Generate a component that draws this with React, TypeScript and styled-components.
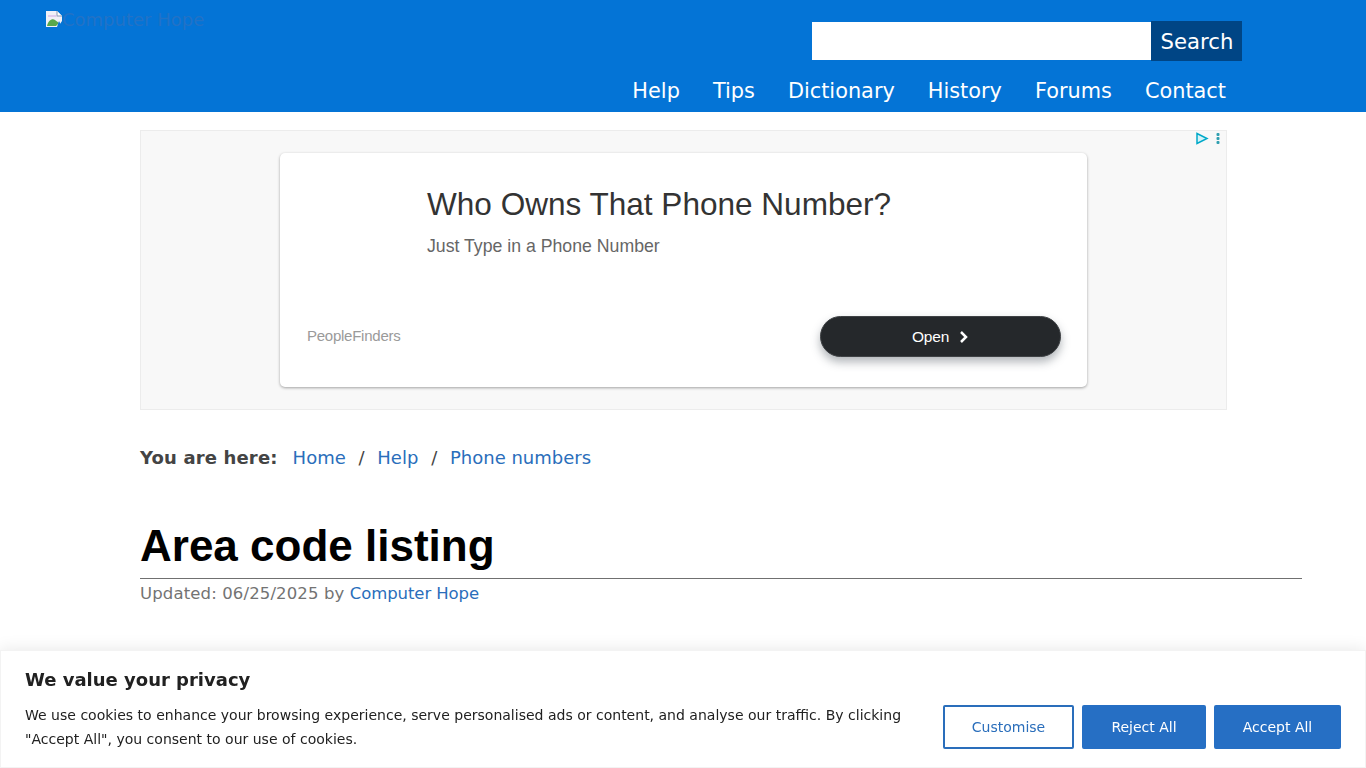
import React from "react";
import styled, { createGlobalStyle } from "styled-components";

const GlobalStyle = createGlobalStyle`
  html, body {
    margin: 0;
    padding: 0;
    background: #fff;
    font-family: "DejaVu Sans", Verdana, sans-serif;
    overflow: hidden;
  }
`;

const Page = styled.div`
  height: 768px;
  overflow: hidden;
`;

const Header = styled.header`
  height: 112px;
  box-sizing: border-box;
  background: #0474d6;
  padding: 11px 124px 0 46px;
  display: flex;
  justify-content: space-between;
`;

const LogoAlt = styled.div`
  display: flex;
  align-items: flex-start;
  height: 20px;
  font-size: 18px;
  line-height: 18px;
  color: #2272c6;
`;

const HeaderRight = styled.div`
  display: flex;
  flex-direction: column;
  align-items: flex-end;
`;

const SearchForm = styled.form`
  display: flex;
  align-items: center;
  margin-top: 10px;
`;

const SearchInput = styled.input`
  width: 339px;
  height: 38px;
  box-sizing: border-box;
  border: 0;
  background: #fff;
`;

const SearchButton = styled.button`
  width: 91px;
  height: 40px;
  border: 0;
  padding: 0 0 0 1px;
  background: #004585;
  color: #fff;
  font: 21.2px "DejaVu Sans", Verdana, sans-serif;
`;

const Nav = styled.nav`
  display: flex;
  gap: 33px;
  margin: 17px 16px 0 0;
`;

const NavLink = styled.a`
  color: #fff;
  font-size: 20.85px;
  line-height: 26px;
  text-decoration: none;
`;

const Main = styled.main`
  padding: 18px 64px 0 140px;
`;

const AdFrame = styled.div`
  position: relative;
  width: 1087px;
  height: 280px;
  box-sizing: border-box;
  background: #f8f8f8;
  border: 1px solid #ececec;
  padding: 22px 139px 0;
`;

const AdChoices = styled.div`
  position: absolute;
  top: 0;
  right: 0;
  display: flex;
`;

const AdCard = styled.div`
  width: 807px;
  height: 234px;
  box-sizing: border-box;
  background: #fff;
  border-radius: 5px;
  box-shadow: 0 1px 3px rgba(0, 0, 0, 0.35);
  padding: 31px 26px 0 27px;
  font-family: "Liberation Sans", Arial, sans-serif;
`;

const AdTitle = styled.div`
  margin-left: 120px;
  font-size: 31.55px;
  line-height: 40px;
  color: #333;
`;

const AdSubtitle = styled.div`
  margin: 11px 0 0 120px;
  font-size: 17.7px;
  line-height: 22px;
  color: #666;
`;

const AdFooter = styled.div`
  display: flex;
  justify-content: space-between;
  align-items: center;
  margin-top: 59px;
`;

const AdBrand = styled.span`
  padding-bottom: 2px;
  font-size: 15px;
  letter-spacing: -0.25px;
  color: #9a9a9a;
`;

const AdButton = styled.div`
  width: 241px;
  height: 41px;
  box-sizing: border-box;
  display: flex;
  align-items: center;
  justify-content: center;
  gap: 10px;
  border: 1px solid #3f4245;
  border-radius: 21px;
  background: #25282b;
  color: #fff;
  font-size: 15.5px;
  letter-spacing: -0.2px;
  box-shadow: 0 5px 10px rgba(60, 70, 80, 0.4);
`;

const Breadcrumbs = styled.div`
  display: flex;
  margin-top: 36px;
  font-size: 18px;
  line-height: 24px;
  color: #444;
`;

const CrumbLabel = styled.strong`
  margin-right: 15px;
  letter-spacing: 0.15px;
`;

const CrumbLink = styled.a`
  color: #2a6ebb;
  text-decoration: none;
`;

const CrumbDivider = styled.span`
  margin: 0 12.75px;
`;

const Title = styled.h1`
  margin: 49px 0 0;
  padding-bottom: 5px;
  border-bottom: 1px solid #707070;
  font: bold 44px/54px "Liberation Sans", Arial, sans-serif;
  color: #000;
`;

const Byline = styled.div`
  font-size: 16.5px;
  line-height: 30px;
  letter-spacing: 0.13px;
  color: #737373;
`;

const BylineLink = styled.a`
  color: #2a6ebb;
  letter-spacing: -0.1px;
  text-decoration: none;
`;

const CookieBanner = styled.section`
  position: fixed;
  left: 0;
  right: 0;
  bottom: 0;
  height: 118px;
  box-sizing: border-box;
  background: #fff;
  border: 1px solid #f3f3f3;
  box-shadow: 0 0 16px rgba(0, 0, 0, 0.1);
  padding: 17px 24px 0;
  color: #212121;
`;

const CookieTitle = styled.h2`
  margin: 0;
  font-size: 18px;
  line-height: 24px;
`;

const CookieRow = styled.div`
  display: flex;
  justify-content: space-between;
  align-items: flex-start;
  margin-top: 11px;
`;

const CookieText = styled.p`
  width: 890px;
  margin: 0;
  font-size: 14.03px;
  line-height: 24px;
`;

const CookieActions = styled.div`
  display: flex;
  gap: 8px;
  margin-top: 2px;
`;

const CookieButton = styled.button<{ $outlined?: boolean; $width: number }>`
  width: ${(p) => p.$width}px;
  height: 44px;
  box-sizing: border-box;
  border: 2px solid ${(p) => (p.$outlined ? "#2a6ebb" : "#266fc4")};
  border-radius: 2px;
  padding: 0;
  background: ${(p) => (p.$outlined ? "#fff" : "#266fc4")};
  color: ${(p) => (p.$outlined ? "#2a6ebb" : "#fff")};
  font: 14px "DejaVu Sans", Verdana, sans-serif;
`;

const BrokenImage = () => (
  <svg width="16" height="16" viewBox="0 0 16 16" style={{ flex: "none" }}>
    <path d="M0 0h11l5 5v5l-4 6H0z" fill="#f1f1f8" />
    <path d="M11 0v5h5" fill="#fff" stroke="#8a9bb0" strokeWidth="1" />
    <path d="M2 4h8l1 2H2z" fill="#e0cdee" />
    <path d="M1 15c1-5 5-8 8-6l4 3-3 3z" fill="#58a84c" />
    <path d="M13 10l3 6h-5z" fill="#0474d6" />
  </svg>
);

const AdIcons = () => (
  <svg width="30" height="15" viewBox="0 0 30 15">
    <path d="M1 2.500l10 5-10 5z" fill="#d6f3f8" stroke="#00a9c9" strokeWidth="1.500" />
    <rect x="20.500" y="2" width="3" height="3" rx="1" fill="#2f9fb0" />
    <rect x="20.500" y="6" width="3" height="3" rx="1" fill="#2f9fb0" />
    <rect x="20.500" y="10" width="3" height="3" rx="1" fill="#2f9fb0" />
  </svg>
);

const Chevron = () => (
  <svg width="10" height="14" viewBox="0 0 10 14">
    <path d="M2 2l5 5-5 5" fill="none" stroke="#fff" strokeWidth="2.500" />
  </svg>
);

const App: React.FC = () => {
  return (
    <Page>
      <GlobalStyle />
      <Header>
        <LogoAlt>
          <BrokenImage />
          Computer Hope
        </LogoAlt>
        <HeaderRight>
          <SearchForm>
            <SearchInput aria-label="Search" />
            <SearchButton type="button">Search</SearchButton>
          </SearchForm>
          <Nav>
            {["Help", "Tips", "Dictionary", "History", "Forums", "Contact"].map((item) => (
              <NavLink key={item} href="#">
                {item}
              </NavLink>
            ))}
          </Nav>
        </HeaderRight>
      </Header>
      <Main>
        <AdFrame>
          <AdChoices>
            <AdIcons />
          </AdChoices>
          <AdCard>
            <AdTitle>Who Owns That Phone Number?</AdTitle>
            <AdSubtitle>Just Type in a Phone Number</AdSubtitle>
            <AdFooter>
              <AdBrand>PeopleFinders</AdBrand>
              <AdButton>
                Open <Chevron />
              </AdButton>
            </AdFooter>
          </AdCard>
        </AdFrame>
        <Breadcrumbs>
          <CrumbLabel>You are here:</CrumbLabel>
          <CrumbLink href="#">Home</CrumbLink>
          <CrumbDivider>/</CrumbDivider>
          <CrumbLink href="#">Help</CrumbLink>
          <CrumbDivider>/</CrumbDivider>
          <CrumbLink href="#">Phone numbers</CrumbLink>
        </Breadcrumbs>
        <Title>Area code listing</Title>
        <Byline>
          Updated: 06/25/2025 by <BylineLink href="#">Computer Hope</BylineLink>
        </Byline>
      </Main>
      <CookieBanner>
        <CookieTitle>We value your privacy</CookieTitle>
        <CookieRow>
          <CookieText>
            We use cookies to enhance your browsing experience, serve personalised ads or content, and analyse our
            traffic. By clicking "Accept All", you consent to our use of cookies.
          </CookieText>
          <CookieActions>
            <CookieButton $outlined $width={131}>
              Customise
            </CookieButton>
            <CookieButton $width={124}>Reject All</CookieButton>
            <CookieButton $width={127}>Accept All</CookieButton>
          </CookieActions>
        </CookieRow>
      </CookieBanner>
    </Page>
  );
};

export default App;
